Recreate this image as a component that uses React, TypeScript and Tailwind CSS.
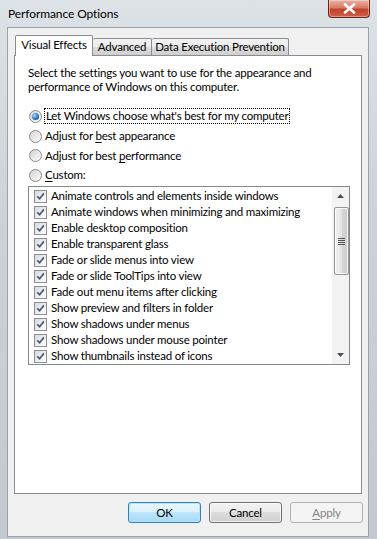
import React from "react";

const effects = [
  "Animate controls and elements inside windows",
  "Animate windows when minimizing and maximizing",
  "Enable desktop composition",
  "Enable transparent glass",
  "Fade or slide menus into view",
  "Fade or slide ToolTips into view",
  "Fade out menu items after clicking",
  "Show preview and filters in folder",
  "Show shadows under menus",
  "Show shadows under mouse pointer",
  "Show thumbnails instead of icons",
];

const Radio = ({ checked }: { checked?: boolean }) => (
  <span className="flex h-[13px] w-[13px] shrink-0 items-center justify-center rounded-full border border-[#8a8a8a] bg-[linear-gradient(135deg,#d4d4d4,#fbfbfb)]">
    {checked && (
      <span className="h-[7px] w-[7px] rounded-full bg-[radial-gradient(circle_at_35%_35%,#a8dcfa,#2a78c0_55%,#0c3f72)]" />
    )}
  </span>
);

const Check = () => (
  <span className="flex h-[13px] w-[13px] shrink-0 items-center justify-center border border-[#8f8f8f] bg-[linear-gradient(135deg,#d9d9d9,#ffffff)]">
    <svg width="9" height="9" viewBox="0 0 9 9">
      <path d="M1.2 4.3 L3.6 6.8 L7.9 1.4" stroke="#4a5c80" strokeWidth="1.7" fill="none" />
    </svg>
  </span>
);

const App = () => {
  return (
    <div className="flex h-[539px] w-[377px] flex-col overflow-hidden whitespace-nowrap bg-[linear-gradient(180deg,#dde2e6,#ccd2d7_40%,#c3c9ce)] font-['Lato',sans-serif] text-[11.5px] leading-none tracking-[-0.2px] text-black select-none">
      <div className="flex h-[27px] shrink-0 items-start justify-between pl-[8px] pr-[7px]">
        <span className="mt-[8px] text-[12px] tracking-[-0.1px]">Performance Options</span>
        <div className="flex h-[18px] w-[42px] items-center justify-center rounded-b-[4px] border border-t-0 border-[#6e2418] bg-[linear-gradient(180deg,#eab3a6,#d97b65_45%,#c2412a_55%,#d0604a)] shadow-[inset_0_0_0_1px_rgba(255,255,255,0.35)]">
          <svg width="13" height="11" viewBox="0 0 13 11">
            <path d="M2 1.5 L11 9.5 M11 1.5 L2 9.5" stroke="#fff" strokeWidth="2.6" strokeLinecap="round" />
          </svg>
        </div>
      </div>

      <div className="mb-[2px] ml-[7px] mr-[8px] flex flex-1 flex-col border border-[#9aa3ab] bg-[#f0f0f0]">
        {/* tabs */}
        <div className="ml-[7px] mt-[7px] flex h-[20px] items-end">
          <div className="relative z-10 -mb-[1px] flex h-[21px] w-[78px] items-center justify-center rounded-t-[2px] border border-b-0 border-[#898c95] bg-white pb-[2px]">
            Visual Effects
          </div>
          <div className="flex h-[17px] w-[59px] items-center justify-center rounded-t-[2px] border border-b-0 border-l-0 border-[#898c95] bg-[linear-gradient(180deg,#f2f2f2,#ebebeb_50%,#dddddd_50%,#cfcfcf)]">
            Advanced
          </div>
          <div className="flex h-[17px] w-[137px] items-center justify-center rounded-t-[2px] border border-b-0 border-l-0 border-[#898c95] bg-[linear-gradient(180deg,#f2f2f2,#ebebeb_50%,#dddddd_50%,#cfcfcf)]">
            Data Execution Prevention
          </div>
        </div>

        <div className="ml-[6px] flex h-[439px] w-[348px] flex-col border border-[#898c95] bg-white">
          <p className="ml-[13px] mt-[10px] leading-[14px]">
            Select the settings you want to use for the appearance and
            <br />
            performance of Windows on this computer.
          </p>

          <div className="ml-[14px] mt-[12px] flex flex-col">
            <div className="flex h-[20px] items-center gap-[2px]">
              <Radio checked />
              <span className="border border-dotted border-black px-[1px] py-[1px]">
                Let Windows choose what's best for my computer
              </span>
            </div>
            <div className="flex h-[20px] items-center gap-[3px]">
              <Radio />
              <span>
                Adjust for <u className="underline-offset-2">b</u>est appearance
              </span>
            </div>
            <div className="flex h-[19px] items-center gap-[3px]">
              <Radio />
              <span>
                Adjust for best <u className="underline-offset-2">p</u>erformance
              </span>
            </div>
            <div className="flex h-[20px] items-center gap-[3px]">
              <Radio />
              <span>
                <u className="underline-offset-2">C</u>ustom:
              </span>
            </div>
          </div>

          <div className="ml-[13px] mt-[1px] flex h-[179px] w-[322px] border border-[#828790] bg-white">
            <div className="flex flex-1 flex-col overflow-hidden pl-[5px] pt-[1px]">
              {effects.map((e) => (
                <div key={e} className="flex h-[16px] shrink-0 items-center gap-[4px]">
                  <Check />
                  <span>{e}</span>
                </div>
              ))}
            </div>
            <div className="flex w-[17px] flex-col items-center bg-[#f3f3f3]">
              <div className="flex h-[18px] w-full items-center justify-center">
                <svg width="7" height="4" viewBox="0 0 7 4">
                  <path d="M0 4 L3.5 0 L7 4 Z" fill="#4d4d4d" />
                </svg>
              </div>
              <div className="ml-[1px] mt-[2px] flex h-[68px] w-[15px] items-center justify-center rounded-[2px] border border-[#959595] bg-[linear-gradient(90deg,#f0f0f0,#e4e4e4_50%,#d6d6d6_50%,#cccccc)] shadow-[inset_0_0_0_1px_rgba(255,255,255,0.8)]">
                <div className="flex flex-col gap-[1px]">
                  <span className="h-[1px] w-[7px] bg-[#555]" />
                  <span className="h-[1px] w-[7px] bg-[#555]" />
                  <span className="h-[1px] w-[7px] bg-[#555]" />
                  <span className="h-[1px] w-[7px] bg-[#555]" />
                </div>
              </div>
              <div className="flex-1" />
              <div className="flex h-[18px] w-full items-center justify-center">
                <svg width="7" height="4" viewBox="0 0 7 4">
                  <path d="M0 0 L3.5 4 L7 0 Z" fill="#4d4d4d" />
                </svg>
              </div>
            </div>
          </div>
        </div>

        <div className="ml-[120px] mt-[8px] flex gap-[8px]">
          <button className="flex h-[21px] w-[73px] items-center justify-center rounded-[3px] border border-[#3c7fb1] bg-[linear-gradient(180deg,#eaf6fd,#d9f0fc_50%,#bee6fd_50%,#a7d9f5)] shadow-[inset_0_0_0_1px_rgba(170,230,255,0.9)]">
            OK
          </button>
          <button className="flex h-[21px] w-[73px] items-center justify-center rounded-[3px] border border-[#707070] bg-[linear-gradient(180deg,#f2f2f2,#ebebeb_50%,#dddddd_50%,#cfcfcf)] shadow-[inset_0_0_0_1px_rgba(255,255,255,0.7)]">
            Cancel
          </button>
          <button className="flex h-[21px] w-[73px] items-center justify-center rounded-[3px] border border-[#adb2b5] bg-[#f4f4f4] text-[#838383]">
            <span>
              <u className="underline-offset-2">A</u>pply
            </span>
          </button>
        </div>
      </div>
    </div>
  );
};

export default App;
